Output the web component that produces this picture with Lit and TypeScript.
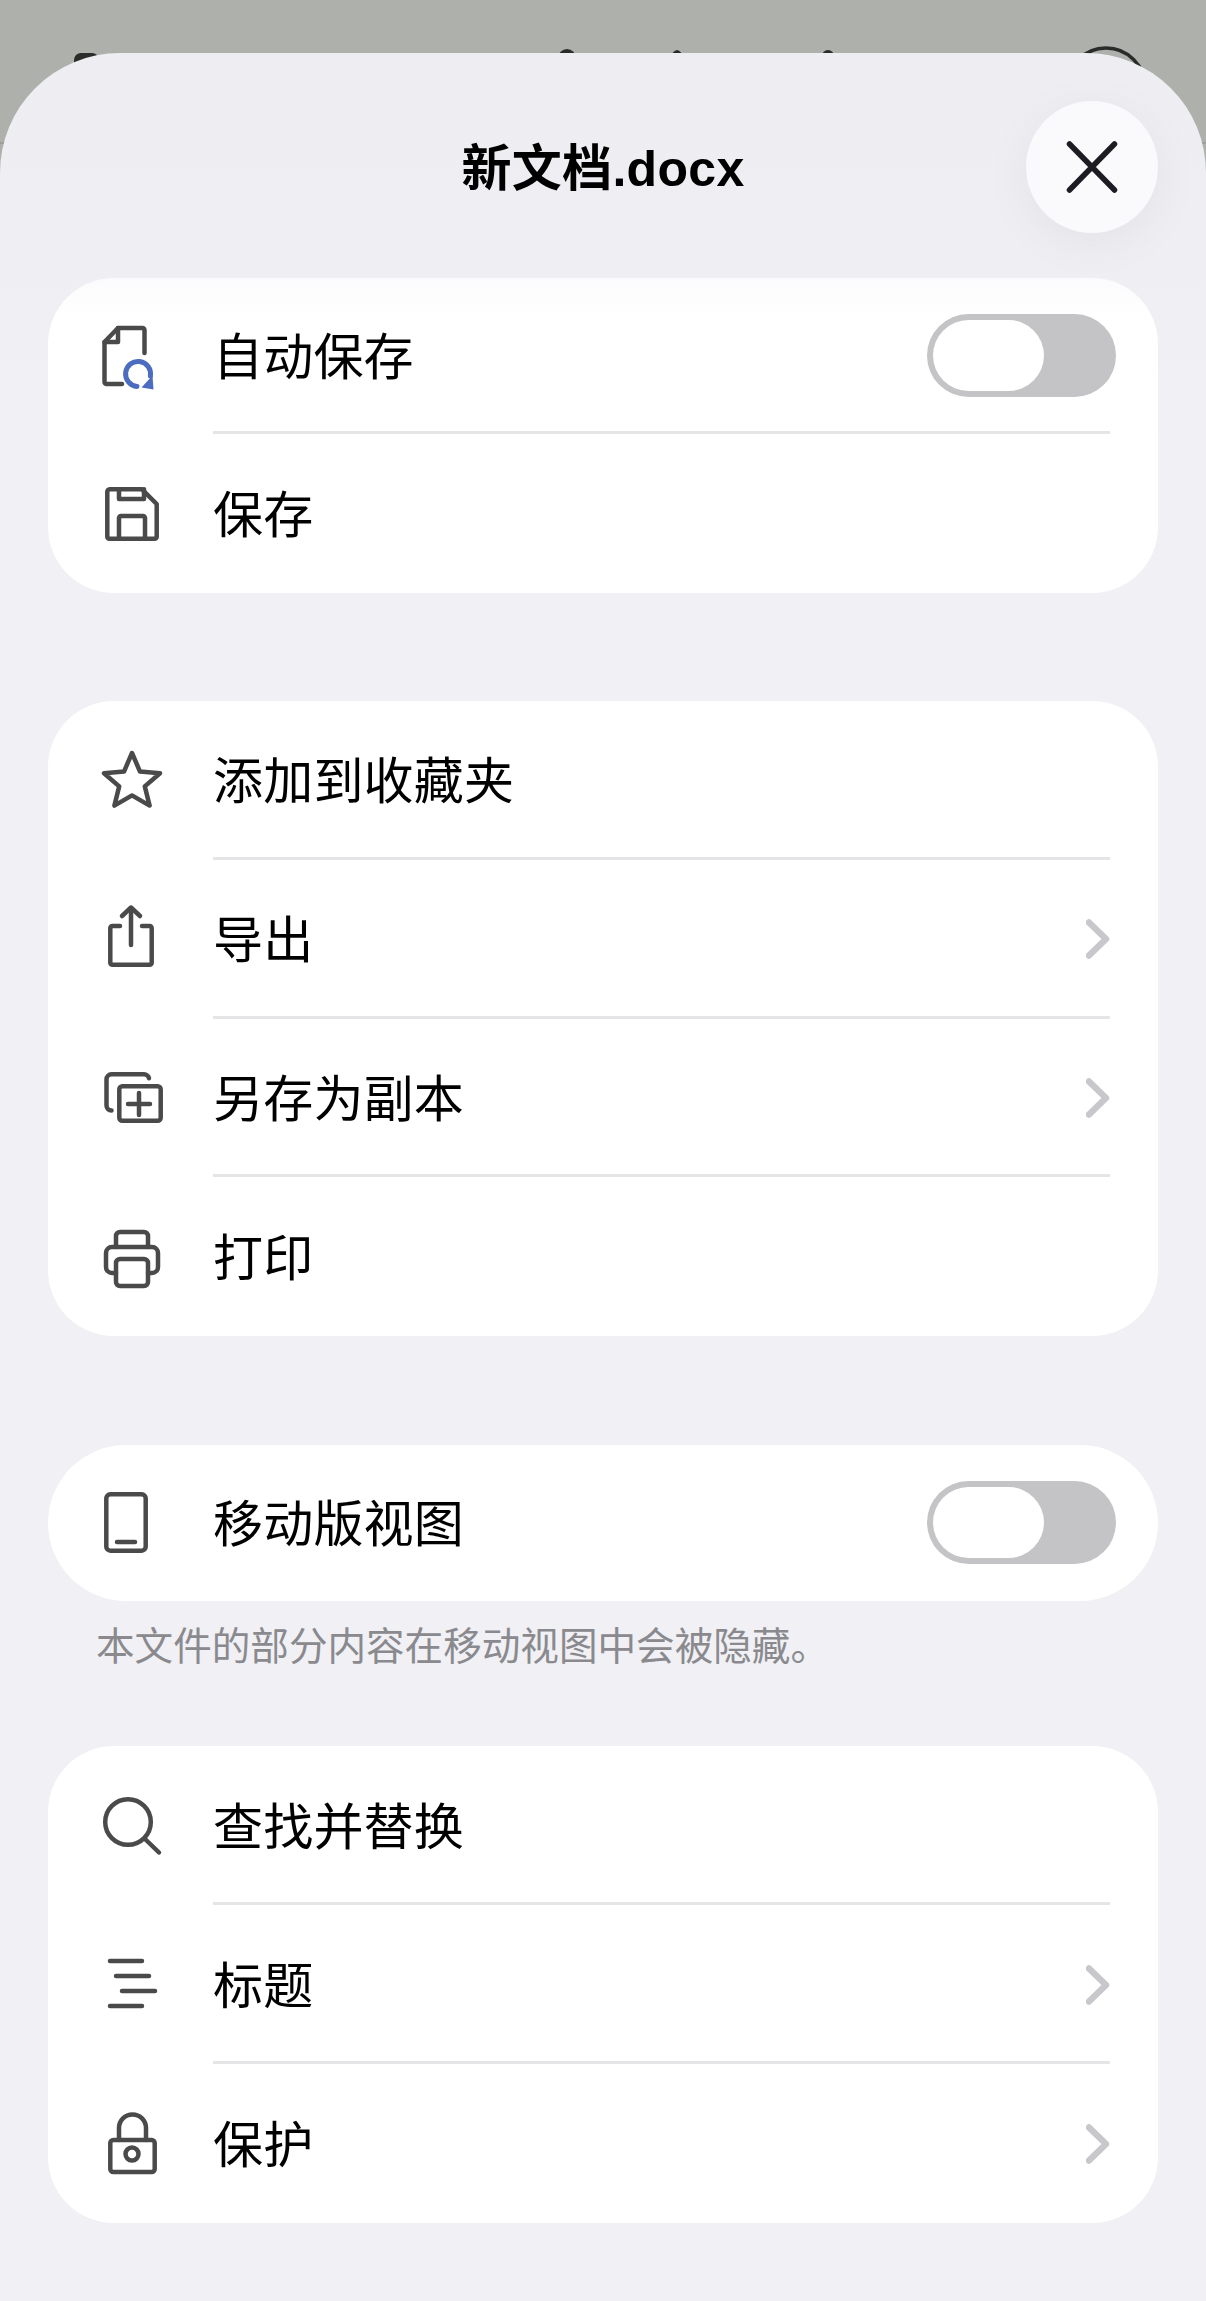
import { LitElement, html, svg, css } from 'lit';
import { customElement } from 'lit/decorators.js';

// each icon is drawn on an 80x80 box centred on its row
const icons: Record<string, unknown> = {
  autosave: svg`
    <path d="M52.5 37V14a2 2 0 0 0-2-2H26L12.5 26v40a2 2 0 0 0 2 2H30" />
    <path d="M26 12v14H12.5" />
    <path class="blue" d="M45 70.4A12.5 12.5 0 1 1 58.4 60" />
    <path class="blue-fill" d="M49.5 71.5L61.5 73.5L60.5 59.5Z" />`,
  save: svg`
    <path d="M17.5 15.3H50L64.7 30v32.7a2 2 0 0 1-2 2H17.3a2 2 0 0 1-2-2V17.5a2 2 0 0 1 2-2Z" />
    <path d="M27 15.3V25h25V15.3" />
    <path d="M27 64.7V44a2 2 0 0 1 2-2h22a2 2 0 0 1 2 2v20.7" />`,
  star: svg`
    <path d="M40 13L48 31.6L68 33.2L52.8 46.4L57.6 65.6L40 55.4L22.4 65.6L27.2 46.4L12 33.2L32 31.6Z" />`,
  share: svg`
    <path d="M28 27H20.3a2 2 0 0 0-2 2v34.7a2 2 0 0 0 2 2h37.4a2 2 0 0 0 2-2V29a2 2 0 0 0-2-2H50" />
    <path d="M39 46V9" />
    <path d="M30 17L39 8.5L48 17" />`,
  copy: svg`
    <path d="M19.5 52.5a5 5 0 0 1-5-5V21.3a5 5 0 0 1 5-5H52a5 5 0 0 1 5 4" />
    <rect x="27.3" y="28.3" width="41.4" height="34.4" rx="3" />
    <path d="M36 46h22M47 35v22" />`,
  print: svg`
    <path d="M24 56H20a6 6 0 0 1-6-6V36a6 6 0 0 1 6-6H60a6 6 0 0 1 6 6V50a6 6 0 0 1-6 6H56" />
    <path d="M24 30V19a4 4 0 0 1 4-4H52a4 4 0 0 1 4 4V30" />
    <rect x="24" y="42" width="32" height="27" rx="4" />`,
  phone: svg`
    <rect x="14.3" y="11.3" width="39.4" height="56.4" rx="4" />
    <path d="M25 59H43" />`,
  search: svg`
    <circle cx="36" cy="36" r="22.8" />
    <path d="M53 53L67 66.5" />`,
  headings: svg`
    <path d="M18 16H50M24 31H57M30 46H63M18 61H50" />`,
  lock: svg`
    <rect x="18.3" y="36" width="44.4" height="32" rx="3" />
    <path d="M27 36V24a13.5 13.5 0 0 1 27 0V36" />
    <circle cx="40" cy="50" r="6.5" />`,
};

type Row = { label: string; icon: string; toggle?: boolean; more?: boolean; short?: boolean };

const saveRows: Row[] = [
  { label: '自动保存', icon: 'autosave', toggle: true, short: true },
  { label: '保存', icon: 'save' },
];
const fileRows: Row[] = [
  { label: '添加到收藏夹', icon: 'star' },
  { label: '导出', icon: 'share', more: true },
  { label: '另存为副本', icon: 'copy', more: true },
  { label: '打印', icon: 'print' },
];
const viewRows: Row[] = [{ label: '移动版视图', icon: 'phone', toggle: true, short: true }];
const toolRows: Row[] = [
  { label: '查找并替换', icon: 'search' },
  { label: '标题', icon: 'headings', more: true },
  { label: '保护', icon: 'lock', more: true },
];

@customElement('app-root')
export class AppRoot extends LitElement {
  static styles = css`
    :host {
      display: block;
      position: relative;
      height: 2301px;
      overflow: hidden;
      background: #aeb0ac;
      font-family: 'Liberation Sans', 'Noto Sans CJK SC', sans-serif;
    }

    .behind {
      position: absolute;
      top: 0;
      left: 0;
    }

    .sheet {
      position: relative;
      margin-top: 53px;
      height: 2248px;
      padding: 0 48px;
      box-sizing: border-box;
      border-radius: 120px 120px 0 0;
      background: linear-gradient(#eeedf2, #eeeef3 200px, #f0f0f5 400px);
    }

    .header {
      position: relative;
      height: 225px;
      display: flex;
      align-items: flex-start;
      justify-content: center;
    }

    h1 {
      margin: 79px 0 0;
      font-size: 50px;
      line-height: 74px;
      font-weight: 700;
      letter-spacing: 0.3px;
      color: #000;
    }

    .close {
      position: absolute;
      top: 48px;
      right: 0;
      width: 132px;
      height: 132px;
      padding: 0;
      border: none;
      border-radius: 50%;
      display: flex;
      align-items: center;
      justify-content: center;
      background: #fafafd;
      box-shadow: 0 10px 50px rgba(0, 0, 0, 0.05);
    }

    .card {
      background: #fff;
      border-radius: 66px;
      overflow: hidden;
      margin-bottom: 108px;
    }
    .card.first {
      background: linear-gradient(#fbfbfd, #fff 40px);
    }
    .card.single {
      border-radius: 78px;
      margin-bottom: 0;
    }
    .card.four .row {
      height: 158.75px;
    }
    .card.four {
      margin-bottom: 109px;
    }

    .row {
      position: relative;
      height: 159px;
      display: flex;
      align-items: center;
    }
    .row.short {
      height: 156px;
    }
    .row:not(:last-child)::after {
      content: '';
      position: absolute;
      left: 165px;
      right: 48px;
      bottom: 0;
      height: 3px;
      background: #e5e5e8;
    }

    .icon {
      flex: none;
      width: 80px;
      height: 80px;
      margin: 0 41px 0 44px;
      fill: none;
      stroke: #4a4a4a;
      stroke-width: 4.5;
      stroke-linecap: round;
      stroke-linejoin: round;
    }
    .icon .blue {
      stroke: #4b6cc1;
      stroke-width: 5;
    }
    .icon .blue-fill {
      fill: #4b6cc1;
      stroke: none;
    }

    .label {
      flex: 1;
      margin-bottom: 6px;
      font-family: 'Noto Sans CJK SC', sans-serif;
      font-size: 50px;
      letter-spacing: 0.2px;
      line-height: 74px;
      color: #000;
    }

    .switch {
      flex: none;
      width: 189px;
      height: 83px;
      margin-right: 42px;
      margin-bottom: 1px;
      padding: 6px;
      box-sizing: border-box;
      border-radius: 42px;
      background: #c4c4c6;
    }
    .knob {
      width: 111px;
      height: 71px;
      border-radius: 36px;
      background: #fff;
    }

    .chevron {
      flex: none;
      width: 24px;
      height: 40px;
      margin-right: 48px;
      fill: none;
      stroke: #c7c7cc;
      stroke-width: 6.5;
      stroke-linecap: round;
      stroke-linejoin: round;
    }

    .note {
      height: 145px;
      box-sizing: border-box;
      padding: 15px 0 0 48px;
      font-family: 'Noto Sans CJK SC', sans-serif;
      font-size: 38.6px;
      line-height: 54px;
      color: #8a8a8e;
    }
  `;

  renderRow(row: Row) {
    return html`
      <div class="row ${row.short ? 'short' : ''}">
        <svg class="icon" viewBox="0 0 80 80">${icons[row.icon]}</svg>
        <span class="label">${row.label}</span>
        ${row.toggle ? html`<div class="switch"><div class="knob"></div></div>` : ''}
        ${row.more
          ? html`<svg class="chevron" viewBox="0 0 24 40"><path d="M3 3.5L20 20L3 36.5" /></svg>`
          : ''}
      </div>
    `;
  }

  render() {
    return html`
      <svg class="behind" width="1206" height="150" viewBox="0 0 1206 150">
        <rect x="74" y="53" width="25" height="30" rx="7" fill="#2a2c2a" />
        <circle cx="567" cy="58" r="9" fill="#2a2c2a" />
        <path d="M669 60Q677 40 685 60Z" fill="#2a2c2a" />
        <circle cx="828" cy="56" r="6" fill="#2a2c2a" />
        <circle cx="1106" cy="87" r="39" fill="none" stroke="#2a2c2a" stroke-width="3.5" />
        <path d="M0 143H1206" stroke="#8b8d8a" stroke-width="1" />
      </svg>
      <div class="sheet">
        <div class="header">
          <h1>新文档.docx</h1>
          <button class="close" aria-label="关闭">
            <svg width="60" height="60" viewBox="0 0 60 60" fill="none" stroke="#1c1c22" stroke-width="5.5" stroke-linecap="round">
              <path d="M7.5 7L52.5 53M52.5 7L7.5 53" />
            </svg>
          </button>
        </div>
        <div class="card first">${saveRows.map((r) => this.renderRow(r))}</div>
        <div class="card four">${fileRows.map((r) => this.renderRow(r))}</div>
        <div class="card single">${viewRows.map((r) => this.renderRow(r))}</div>
        <div class="note">本文件的部分内容在移动视图中会被隐藏。</div>
        <div class="card">${toolRows.map((r) => this.renderRow(r))}</div>
      </div>
    `;
  }
}
